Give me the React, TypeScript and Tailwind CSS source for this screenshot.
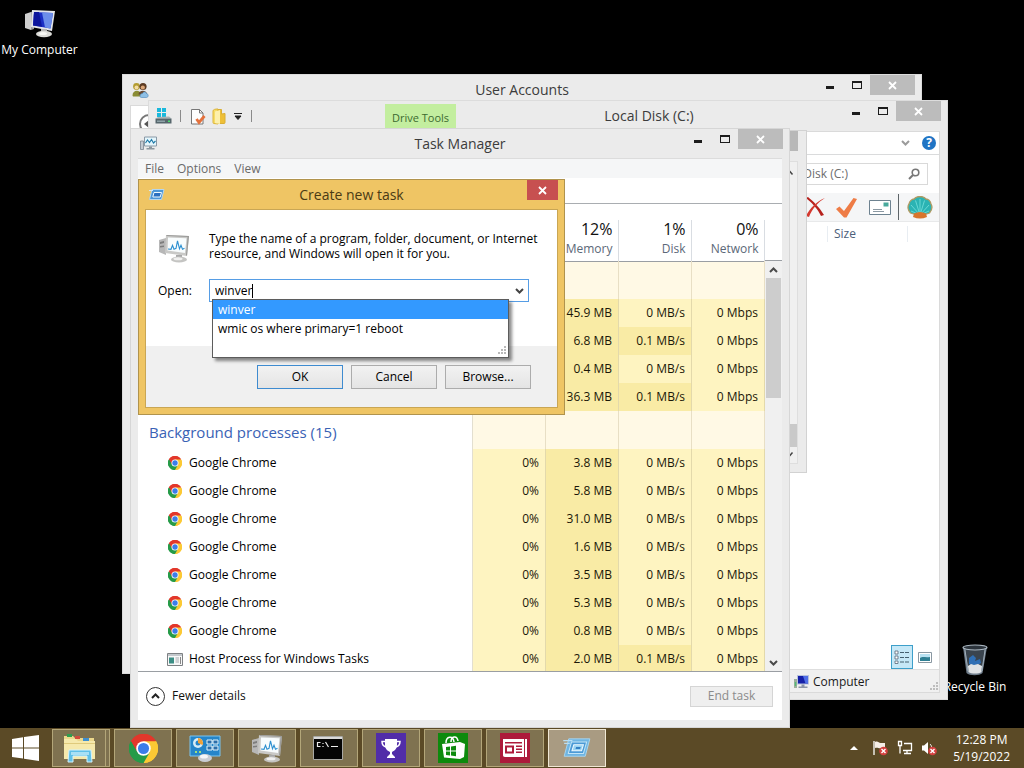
import React, { type ReactNode } from "react";

type SvgProps = { className?: string };

function ChromeIcon({ className }: SvgProps) {
  return (
    <svg viewBox="0 0 48 48" className={className} aria-hidden="true">
      <path d="M24 24 3.2 12A24 24 0 0 1 44.8 12Z" fill="#e2372b" />
      <path d="M24 24 44.8 12A24 24 0 0 1 24 48Z" fill="#fcc934" />
      <path d="M24 24 24 48A24 24 0 0 1 3.2 12Z" fill="#259b48" />
      <path d="M24 12H44.8A24 24 0 0 0 3.2 12L13.6 30Z" fill="#e2372b" />
      <path d="M34.4 30 24 48A24 24 0 0 0 44.8 12H24Z" fill="#fcc934" />
      <path d="M13.6 30 3.2 12A24 24 0 0 0 24 48L34.4 30Z" fill="#259b48" />
      <circle cx="24" cy="24" r="12" fill="#fff" />
      <circle cx="24" cy="24" r="9.2" fill="#3b7de9" />
    </svg>
  );
}

function ComputerIcon({ className }: SvgProps) {
  return (
    <svg viewBox="0 0 32 30" className={className} aria-hidden="true">
      <path d="M1 6 7 4v18l-6-2Z" fill="#cfcfcf" />
      <path d="m7 4 3-1v18l-3 1Z" fill="#9c9c9c" />
      <path d="M8 2 31 3 28 23 7 19Z" fill="#e4e6ea" />
      <path d="M10 4 29 5 26.500 20.500 9 17.500Z" fill="#1b2fc4" />
      <path d="M18 4.500 29 5 26.500 20.500 21 19.500Z" fill="#6c8eea" />
      <path d="M10 4h5l3 14.800L9 17.500Z" fill="#0c159c" />
      <path d="M17 21h6v4h-6Z" fill="#b5b5b5" />
      <ellipse cx="20" cy="26" rx="8" ry="3.200" fill="#dcdcd8" />
      <ellipse cx="19" cy="25.500" rx="4" ry="1.600" fill="#f7f7f4" />
    </svg>
  );
}

function SmallComputerIcon({ className }: SvgProps) {
  return (
    <svg viewBox="0 0 17 15" className={className} aria-hidden="true">
      <path d="M1 5h3v9H1Z" fill="#9db09d" />
      <path d="M1.800 8h1.400v4H1.800Z" fill="#5b7" />
      <path d="M4 1h12v9.500H4Z" fill="#b9c3dd" />
      <path d="M5 2h10v7.500H5Z" fill="#1520a8" />
      <path d="M10 2h5v7.500h-2.500Z" fill="#4f6ee6" />
      <path d="M8.500 10.500h3v2h3v1.500h-9v-1.500h3Z" fill="#8d96a8" />
    </svg>
  );
}

function MonitorIcon({ className }: SvgProps) {
  return (
    <svg viewBox="0 0 32 30" className={className} aria-hidden="true">
      <path d="M1 7 8 5v17l-7-3Z" fill="#b7b7b7" />
      <path d="M2 9l4-1v2L2 11Zm0 4 4-.5v1.500L2 14.500Z" fill="#7d7d7d" />
      <path d="m8 2 23 1-2 20L7 20Z" fill="#c9c9c7" />
      <path d="m8 2 23 1-2 20-1-1 1.500-18L9 3Z" fill="#9a9a98" />
      <path d="m10 4.500 18.500.700L27 20 9.500 17.500Z" fill="#f8fcfd" />
      <path
        d="m10 16 3 .3 1.500-4 1.500 4 2-1 1.500-7.500 2 8 1.500-3.500 1.500 4 2-1"
        fill="none"
        stroke="#2b8fd0"
        strokeWidth="1.100"
      />
      <path d="M18 22h6v3h-6Z" fill="#a8a8a8" />
      <ellipse cx="21" cy="26.500" rx="8" ry="3" fill="#c4c4c2" />
      <ellipse cx="20" cy="25.800" rx="4.500" ry="1.500" fill="#f0f0ef" />
    </svg>
  );
}

function TaskManagerSmallIcon({ className }: SvgProps) {
  return (
    <svg viewBox="0 0 17 15" className={className} aria-hidden="true">
      <path d="M.5 5h3v8.500h-3Z" fill="#c5cbd2" stroke="#7b8792" strokeWidth=".8" />
      <path d="M4.500 1h12v9h-12Z" fill="#e5f6fc" stroke="#8a99a6" />
      <path d="m5.500 7 2-3 2 2.500 2-3 2 3.500 2-2" fill="none" stroke="#1f7aa8" strokeWidth="1.100" />
      <path d="M9 10.500h3V12h2.500v1.500h-8V12H9Z" fill="#8b969e" />
    </svg>
  );
}

function RunIcon({ className }: SvgProps) {
  return (
    <svg viewBox="0 0 32 24" className={className} aria-hidden="true">
      <path d="M7 2h23l-5 19H2Z" fill="#6fb5e3" stroke="#a9d8f2" />
      <path d="M1 4h10M2 7h6" stroke="#b9def3" strokeWidth="1.300" />
      <path d="M10 5.500h16.500L23 18H6.500Z" fill="#4c9ad6" stroke="#c3e5f7" strokeWidth="1.100" />
      <path d="M12.500 8.500h10.500L21 15H10.500Z" fill="#9ad3f2" stroke="#eef9ff" strokeWidth="1.100" />
      <path d="M15 11h5l-.6 2h-5Z" fill="#3380c4" />
    </svg>
  );
}

function SmallRunIcon({ className }: SvgProps) {
  return (
    <svg viewBox="0 0 17 13" className={className} aria-hidden="true">
      <path d="M4 1.500h12l-2.500 10H1.500Z" fill="#4d97d8" stroke="#b5d6ee" />
      <path d="M1 2.500h4" stroke="#d5e8f4" />
      <path d="M6 4.500h7.500l-1.300 4.500H4.800Z" fill="#2a6fc0" stroke="#f0f9ff" />
    </svg>
  );
}

function UsersIcon({ className }: SvgProps) {
  return (
    <svg viewBox="0 0 17 16" className={className} aria-hidden="true">
      <circle cx="4.500" cy="4" r="3.400" fill="#b39c30" />
      <circle cx="4.500" cy="5" r="2" fill="#f3dca5" />
      <path d="M.5 13c0-6 8-6 8.500-1v2H1Z" fill="#8a8c34" />
      <circle cx="11" cy="4" r="3.600" fill="#5b3a22" />
      <circle cx="10.800" cy="5" r="2.100" fill="#dba678" />
      <path d="M6.500 12c0-5 8.500-5 8.500 0Z" fill="#6b4a33" />
      <path d="M8 13.500c0-2 2-2.500 2.500-2.500 1-2.500 4-1.500 4 0 2.500.500 2 4 0 4h-5C8.500 15 8 14.500 8 13.500Z" fill="#8fc0e6" stroke="#4c86b9" strokeWidth=".6" />
    </svg>
  );
}

function DriveIcon({ className }: SvgProps) {
  return (
    <svg viewBox="0 0 17 17" className={className} aria-hidden="true">
      <path d="M2 0h4v4H2Zm5 0h4v4H7ZM2 5h4v4H2Zm5 0h4v4H7Z" fill="#19b8dc" />
      <path d="m3 9 11-.5 2.500 2H1Z" fill="#a9b3b5" />
      <path d="M.5 10.500h16v5H.5Z" fill="#56666c" />
      <path d="M2 12.500h8v1.500H2Z" fill="#8ea2a7" />
      <path d="M13 12.500h2V14h-2Z" fill="#4be06d" />
    </svg>
  );
}

function DocumentCheckIcon({ className }: SvgProps) {
  return (
    <svg viewBox="0 0 16 17" className={className} aria-hidden="true">
      <path d="M1.500 1.500h8l3.500 3.500v11H1.500Z" fill="#fdfdfd" stroke="#777" />
      <path d="M9.500 1.500V5H13" fill="none" stroke="#777" />
      <path d="m6.500 11 2.500 3.500L14.500 8" fill="none" stroke="#e4713c" strokeWidth="2.800" />
    </svg>
  );
}

function FolderIcon({ className }: SvgProps) {
  return (
    <svg viewBox="0 0 14 17" className={className} aria-hidden="true">
      <path d="M1 3c0-1.500 2-2 5-2v15l-4-.5q-1 0-1-1Z" fill="#f7dc66" stroke="#dcb53c" />
      <path d="M6 1.500h3.500V6l3.500-.5v9q0 1-1 1H6Z" fill="#eebf37" stroke="#d9ae35" />
      <path d="M3 3.500 8 2v14l-5-1Z" fill="#fdf0ac" />
    </svg>
  );
}

function ShellIcon({ className }: SvgProps) {
  return (
    <svg viewBox="0 0 26 23" className={className} aria-hidden="true">
      <path d="M13 20 3.500 17C.5 14 .5 10 2 8c.5-3 3-5 5-5 1.500-2 4-2.500 6-2.500S17.500 1 19 3c2.500 0 4.500 2.500 5 5 1.500 2.500 1 6-1.500 9Z" fill="#2bb3b3" stroke="#b09a62" strokeWidth="1.300" />
      <path d="M13 19V3M13 19 8.500 4.500M13 19l4.500-14.500M13 19 4 9M13 19 22 9M13 19 4 15M13 19l9-4" stroke="#6fdcd8" strokeWidth=".9" />
      <path d="M7 17.500q6-3 12 0l1 3.500q-7 3-14 0Z" fill="#d9752c" />
    </svg>
  );
}

function ProcessWindowIcon({ className }: SvgProps) {
  return (
    <svg viewBox="0 0 16 13" className={className} aria-hidden="true">
      <path d="M.5.5h15v12H.5Z" fill="#f8f8f8" stroke="#7d8083" />
      <path d="M1 1h14v2H1Z" fill="#c3c8cc" />
      <path d="M2 4.500h5v6H2Z" fill="#3c8e85" />
      <path d="M8.500 5H12M8.500 7H12M8.500 9H12" stroke="#a5a9ad" />
      <path d="M13.500 4v7" stroke="#888" />
    </svg>
  );
}

function CloseGlyph() {
  return (
    <svg viewBox="0 0 9 9" className="size-[9px]" aria-hidden="true">
      <path d="m1 1 7 7M8 1 1 8" stroke="#fff" strokeWidth="1.800" />
    </svg>
  );
}

function CaptionButtons() {
  return (
    <div className="flex items-start">
      <button aria-label="Minimize" className="flex h-5 w-7 items-center justify-center">
        <span className="mt-1 h-[3px] w-2 bg-[#1c1c1c]" />
      </button>
      <button aria-label="Maximize" className="flex h-5 w-[26px] items-center justify-center">
        <span className="h-2 w-[10px] border border-t-2 border-[#1c1c1c]" />
      </button>
      <button aria-label="Close" className="flex h-5 w-[45px] items-center justify-center bg-[#bcbcbc]">
        <CloseGlyph />
      </button>
    </div>
  );
}

function TitleBar({ icon, title, height }: { icon: ReactNode; title: string; height: string }) {
  return (
    <header className={`flex shrink-0 items-start ${height}`}>
      <div className="flex h-full w-[116px] items-center pl-[9px]">{icon}</div>
      <h2 className="flex h-full flex-1 items-center justify-center text-sm text-[#3c3c3c]">{title}</h2>
      <div className="flex w-[116px] shrink-0 justify-end pr-[6px]">
        <CaptionButtons />
      </div>
    </header>
  );
}

function UserAccountsWindow() {
  return (
    <section className="absolute left-[122px] top-[74px] flex h-[600px] w-[800px] flex-col border border-[#dcdcdc] bg-[#ebebeb]">
      <TitleBar icon={<UsersIcon className="size-[17px]" />} title="User Accounts" height="h-[30px]" />
      <div className="mx-[7px] mb-[7px] flex-1 border border-[#dadada] bg-white pl-2 pt-2">
        <button aria-label="Back" className="flex size-5 items-center justify-center rounded-full border-2 border-[#777]">
          <svg viewBox="0 0 10 8" className="h-2 w-[10px]" aria-hidden="true">
            <path d="M5 0 0 4l5 4V5h5V3H5Z" fill="#555" />
          </svg>
        </button>
      </div>
    </section>
  );
}

function DiskWindow() {
  return (
    <section className="absolute left-[148px] top-[100px] flex h-[600px] w-[800px] flex-col border border-[#dcdcdc] bg-[#ebebeb]">
      <header className="flex h-[30px] shrink-0 items-start">
        <div className="flex h-full items-center pl-[6px]">
          <DriveIcon className="size-[17px]" />
          <span className="ml-[8px] h-3 w-px bg-[#8a8a8a]" />
          <DocumentCheckIcon className="ml-[9px] h-[17px] w-4" />
          <FolderIcon className="ml-[6px] h-[17px] w-[14px]" />
          <svg viewBox="0 0 8 7" className="ml-2 h-[7px] w-2" aria-hidden="true">
            <path d="M0 .5h8M1 3h6L4 6.500Z" stroke="#222" strokeWidth="1" fill="#222" />
          </svg>
          <span className="ml-[9px] h-3 w-px bg-[#8a8a8a]" />
        </div>
        <div className="ml-[133px] mt-[3px] flex h-[25px] w-[71px] items-end justify-center bg-[#c3ee9f] pb-[3px] text-[11px] text-[#3c6a30]">
          Drive Tools
        </div>
        <h2 className="flex h-full flex-1 items-center justify-center text-sm text-[#3c3c3c]">Local Disk (C:)</h2>
        <div className="mr-[6px]">
          <CaptionButtons />
        </div>
      </header>
      <div className="mx-[7px] mb-[6px] flex flex-1 flex-col border border-[#dadada] bg-white">
        <div className="flex h-[23px] items-center justify-end gap-3 border-b border-[#dadbdc] pr-[3px]">
          <svg viewBox="0 0 9 6" className="h-[6px] w-[9px]" aria-hidden="true">
            <path d="m1 1 3.500 3.500L8 1" fill="none" stroke="#9b9b9b" strokeWidth="2" />
          </svg>
          <button aria-label="Help" className="flex size-[14px] items-center justify-center rounded-full bg-[#1f74c4] text-[12px] font-bold leading-none text-white">
            ?
          </button>
        </div>
        <div className="flex h-[38px] items-center justify-end pr-[11px]">
          <div className="flex h-[22px] w-[280px] items-center border border-[#d9d9d9] pr-[7px]">
            <input
              aria-label="Search"
              readOnly
              value="Search Local Disk (C:)"
              className="mr-[60px] min-w-0 flex-1 bg-transparent text-right text-[12px] text-[#6d6d6d] outline-none"
            />
            <svg viewBox="0 0 12 12" className="size-3 shrink-0" aria-hidden="true">
              <circle cx="7.500" cy="4.500" r="3.300" fill="none" stroke="#777" strokeWidth="1.600" />
              <path d="M5 7 1 11" stroke="#777" strokeWidth="2" />
            </svg>
          </div>
        </div>
        <div className="flex h-[29px] items-center justify-end border-b border-[#e8e9ea] bg-[#f5f6f7] pr-[6px]">
          <svg viewBox="0 0 22 20" className="h-5 w-[22px]" aria-hidden="true">
            <path d="M2 1c5 4 12 11 15 18l3-1C16 11 9 4 4 0Z" fill="#b7221d" />
            <path d="M21 1C13 4 6 11 2 19l3 1C8 12 14 5 21 1Z" fill="#d4392f" />
          </svg>
          <svg viewBox="0 0 21 21" className="ml-[10px] size-[21px]" aria-hidden="true">
            <path d="m0 12 3.500-2.500L8 14 17.500 1l3.500 1L10.500 20.500H8Z" fill="#ee7c46" />
          </svg>
          <svg viewBox="0 0 22 15" className="ml-[12px] h-[15px] w-[22px]" aria-hidden="true">
            <path d="M.5.5h21v14H.5Z" fill="#fff" stroke="#6d8290" />
            <path d="M14.500 2.500h5v4h-5Z" fill="#48a99c" />
            <path d="M4 9.500h9M4 11.500h11" stroke="#8b99a3" />
          </svg>
          <span className="ml-[7px] h-[26px] w-px bg-[#5d6468]" />
          <ShellIcon className="ml-[8px] h-[23px] w-[26px]" />
        </div>
        <div className="flex h-6 items-center justify-end pr-[31px]">
          <span className="flex h-4 w-[81px] items-center border-x border-[#e8edf2] pl-[6px] text-[12px] text-[#4c607a]">Size</span>
        </div>
        <div className="flex flex-1 items-end justify-end gap-1 pr-[6px]">
          <button aria-label="Details view" className="flex h-6 w-[22px] items-center justify-center border border-[#3d9fca] bg-[#c6e8f7]">
            <svg viewBox="0 0 16 14" className="h-[14px] w-4" aria-hidden="true">
              <path d="M1 1h3v3H1Zm0 5h3v3H1Zm0 5h3v2.500H1Z" fill="#fff" stroke="#567" strokeWidth=".8" />
              <path d="M6 2.500h4m1 0h4M6 7.500h4m1 0h4M6 12h4m1 0h4" stroke="#45606f" />
            </svg>
          </button>
          <button aria-label="Large icons view" className="flex h-6 w-4 items-center justify-center">
            <svg viewBox="0 0 14 11" className="h-[11px] w-[14px]" aria-hidden="true">
              <path d="M.5.500h13v10H.5Z" fill="#fff" stroke="#8a98a2" />
              <path d="M2 2h10v7H2Z" fill="#b9e2f2" />
              <path d="M2 6c3-2 5 0 10-1v4H2Z" fill="#2f7f93" />
            </svg>
          </button>
        </div>
        <footer className="flex h-[23px] items-center border-t border-[#dedede] bg-[#f0f0f0] pl-[636px] pt-px text-[12px] text-[#1a1a1a]">
          <SmallComputerIcon className="h-[15px] w-[17px]" />
          <span className="ml-[3px] flex-1">Computer</span>
          <svg viewBox="0 0 10 10" className="mt-2 size-[10px]" aria-hidden="true">
            <path d="M7 1h2v2H7ZM4 4h2v2H4Zm3 0h2v2H7ZM1 7h2v2H1Zm3 0h2v2H4Zm3 0h2v2H7Z" fill="#bdbdbd" />
          </svg>
        </footer>
      </div>
    </section>
  );
}

function BackgroundWindow() {
  return (
    <section className="absolute left-[180px] top-[130px] flex h-[343px] w-[627px] flex-col border border-[#d2d2d2] bg-[#ebebeb]">
      <div className="mr-[8px] h-5 w-[45px] shrink-0 self-end bg-[#b8b8b8]" />
      <div className="mx-[8px] mb-[8px] mt-[10px] flex flex-1 justify-end border border-[#dedede] bg-white">
        <div className="flex w-4 flex-col items-center bg-[#f0f0f0]">
          <svg viewBox="0 0 7 5" className="mt-2 h-[5px] w-[9px]" aria-hidden="true">
            <path d="M.5 4.500 3.500 1l3 3.500" fill="none" stroke="#444" strokeWidth="1.500" />
          </svg>
          <span className="mb-[5px] mt-auto h-[23px] w-full bg-[#c9c9c9]" />
          <svg viewBox="0 0 7 5" className="mb-[6px] h-[5px] w-[9px]" aria-hidden="true">
            <path d="m.5.500 3 3.500 3-3.500" fill="none" stroke="#444" strokeWidth="1.500" />
          </svg>
        </div>
      </div>
    </section>
  );
}

const LIGHT = "bg-[#fef4c1]";
const DARK = "bg-[#f9eba5]";

type Row = { name?: string; cpu?: string; memory: string; disk: string; network: string };

const apps: Row[] = [
  { memory: "45.9 MB", disk: "0 MB/s", network: "0 Mbps" },
  { memory: "6.8 MB", disk: "0.1 MB/s", network: "0 Mbps" },
  { memory: "0.4 MB", disk: "0 MB/s", network: "0 Mbps" },
  { memory: "36.3 MB", disk: "0.1 MB/s", network: "0 Mbps" },
];

const chrome = (memory: string): Row => ({ name: "Google Chrome", cpu: "0%", memory, disk: "0 MB/s", network: "0 Mbps" });

const background: Row[] = [
  chrome("3.8 MB"),
  chrome("5.8 MB"),
  chrome("31.0 MB"),
  chrome("1.6 MB"),
  chrome("3.5 MB"),
  chrome("5.3 MB"),
  chrome("0.8 MB"),
  { name: "Host Process for Windows Tasks", cpu: "0%", memory: "2.0 MB", disk: "0.1 MB/s", network: "0 Mbps" },
];

function ProcessRow({ row }: { row: Row }) {
  return (
    <tr className="h-7 text-[#1b1708]">
      <td className="border-r border-[#e3dfd0] pl-[29px] text-black">
        {row.name && (
          <span className="flex items-center gap-[6px]">
            <span className="flex w-4 justify-center">
              {row.name === "Google Chrome" ? (
                <ChromeIcon className="size-[14px]" />
              ) : (
                <ProcessWindowIcon className="h-[13px] w-4" />
              )}
            </span>
            {row.name}
          </span>
        )}
      </td>
      <td className={`border-r border-[#e3d9ab] pr-[6px] text-right ${LIGHT}`}>{row.cpu}</td>
      <td className={`border-r border-[#e3d9ab] pr-[6px] text-right ${DARK}`}>{row.memory}</td>
      <td className={`border-r border-[#e3d9ab] pr-[6px] text-right ${row.disk === "0 MB/s" ? LIGHT : DARK}`}>{row.disk}</td>
      <td className={`border-r border-[#e3d9ab] pr-[6px] text-right ${LIGHT}`}>{row.network}</td>
    </tr>
  );
}

function GroupRow({ title }: { title?: string }) {
  const cell = "border-r border-[#e8dfc5] bg-[#fff9e5]";
  return (
    <tr className="h-[38px]">
      <td className="border-r border-[#e3dfd0] pl-[11px] pt-1 text-[15px] leading-5 text-[#3a62b5]">{title}</td>
      <td className={cell} />
      <td className={cell} />
      <td className={cell} />
      <td className={cell} />
    </tr>
  );
}

function HeaderCell({ value, label }: { value: string; label: string }) {
  return (
    <th className="p-0 align-bottom font-normal">
      <div className="h-[41px] border-r border-[#d9dde2] pr-[5px] text-right">
        <span className="block text-base leading-[19px] text-[#111]">{value}</span>
        <span className="block text-[12px] leading-5 text-[#5b6878]">{label}</span>
      </div>
    </th>
  );
}

function TaskManagerWindow() {
  return (
    <section className="absolute left-[130px] top-[128px] flex h-[600px] w-[660px] flex-col border border-[#d6d6d6] bg-[#ebebeb]">
      <TitleBar icon={<TaskManagerSmallIcon className="h-[15px] w-[17px]" />} title="Task Manager" height="h-[29px]" />
      <div className="mx-[7px] mb-[7px] flex min-h-0 flex-1 flex-col bg-white">
        <nav className="flex h-5 shrink-0 items-center gap-[13px] border-t border-[#dcdcdc] bg-[#f5f6f7] pl-[7px] text-[12px] text-[#6a6a6a]">
          <button>File</button>
          <button>Options</button>
          <button>View</button>
        </nav>
        <div className="h-[26px] shrink-0 border-b border-[#a9adb1]" />
        <div className="flex min-h-0 flex-1 overflow-hidden">
          <div className="min-w-0 flex-1 overflow-hidden">
            <table className="w-full table-fixed border-collapse text-[12px]">
              <colgroup>
                <col />
                <col className="w-[73px]" />
                <col className="w-[73px]" />
                <col className="w-[73px]" />
                <col className="w-[73px]" />
              </colgroup>
              <thead>
                <tr className="h-[57px] border-b border-[#9a9ea3]">
                  <th />
                  <th />
                  <HeaderCell value="12%" label="Memory" />
                  <HeaderCell value="1%" label="Disk" />
                  <HeaderCell value="0%" label="Network" />
                </tr>
              </thead>
              <tbody>
                <GroupRow />
                {apps.map((row, i) => (
                  <ProcessRow key={i} row={row} />
                ))}
                <GroupRow title="Background processes (15)" />
                {background.map((row, i) => (
                  <ProcessRow key={i} row={row} />
                ))}
              </tbody>
            </table>
          </div>
          <div className="flex w-[17px] shrink-0 flex-col">
            <div className="h-[57px] shrink-0 border-b border-[#9a9ea3]" />
            <div className="flex flex-1 flex-col items-center bg-[#f0f0f0] px-px">
              <button aria-label="Scroll up" className="flex h-[17px] w-full items-center justify-center">
                <svg viewBox="0 0 9 6" className="h-[6px] w-[9px]" aria-hidden="true">
                  <path d="M1 5 4.500 1.500 8 5" fill="none" stroke="#4a4a4a" strokeWidth="2" />
                </svg>
              </button>
              <div className="h-[120px] w-full bg-[#cdcdcd]" />
              <button aria-label="Scroll down" className="mt-auto flex h-[17px] w-full items-center justify-center">
                <svg viewBox="0 0 9 6" className="h-[6px] w-[9px]" aria-hidden="true">
                  <path d="m1 1 3.500 3.500L8 1" fill="none" stroke="#4a4a4a" strokeWidth="2" />
                </svg>
              </button>
            </div>
          </div>
        </div>
        <footer className="flex h-[49px] shrink-0 items-center justify-between border-t border-[#9a9ea3] pl-2 pr-[9px] text-[12px]">
          <button className="flex items-center gap-[7px] text-[#111]">
            <span className="flex size-[19px] items-center justify-center rounded-full border border-[#333]">
              <svg viewBox="0 0 9 6" className="h-[6px] w-[9px]" aria-hidden="true">
                <path d="M1 5 4.500 1.500 8 5" fill="none" stroke="#222" strokeWidth="2" />
              </svg>
            </span>
            Fewer details
          </button>
          <button disabled className="h-[21px] w-[83px] border border-[#d5d5d5] bg-[#efefef] leading-none text-[#8b8b8b]">
            End task
          </button>
        </footer>
      </div>
    </section>
  );
}

function DialogButton({ children, primary }: { children: ReactNode; primary?: boolean }) {
  return (
    <button
      className={`h-6 w-[86px] border bg-linear-to-b from-[#f2f2f2] to-[#e4e4e4] text-[12px] leading-none text-black ${
        primary ? "border-[#3e8bd0]" : "border-[#acacac]"
      }`}
    >
      {children}
    </button>
  );
}

function CreateTaskDialog() {
  return (
    <section
      role="dialog"
      aria-label="Create new task"
      className="absolute left-[138px] top-[179px] flex h-[236px] w-[427px] flex-col border border-[#b0934d] bg-[#efc564]"
    >
      <header className="flex h-[29px] shrink-0 items-start">
        <div className="flex h-full w-[37px] items-center pl-[9px]">
          <SmallRunIcon className="h-[13px] w-[17px]" />
        </div>
        <h2 className="flex h-full flex-1 items-center justify-center text-sm text-[#4a3a14]">Create new task</h2>
        <button aria-label="Close" className="mr-[6px] flex h-5 w-[31px] items-center justify-center bg-[#c75050]">
          <CloseGlyph />
        </button>
      </header>
      <div className="mx-[6px] mb-[6px] flex flex-1 flex-col border border-[#c9a654] bg-white">
        <div className="flex-1 px-3 pt-[21px]">
          <div className="flex gap-[19px]">
            <MonitorIcon className="mt-[2px] h-[30px] w-8" />
            <p className="text-[12px] leading-[15px] text-black">
              Type the name of a program, folder, document, or Internet
              <br />
              resource, and Windows will open it for you.
            </p>
          </div>
          <div className="mt-4 flex items-center">
            <label htmlFor="task-name" className="w-[51px] text-[12px]">
              Open:
            </label>
            <div className="relative flex h-[23px] w-[320px] items-center border border-[#569de5] bg-white pr-1">
              <input
                id="task-name"
                defaultValue="winver"
                className="h-full min-w-0 flex-1 bg-transparent pl-[5px] text-[12px] outline-none"
              />
              <span className="absolute left-[42px] top-1 h-[14px] w-px bg-black" />
              <svg viewBox="0 0 9 6" className="h-[6px] w-[9px]" aria-hidden="true">
                <path d="m1 1 3.500 3.500L8 1" fill="none" stroke="#444" strokeWidth="2" />
              </svg>
              <ul className="absolute left-[2px] top-[19px] h-[59px] w-[297px] border border-[#5c5c5c] bg-white text-[12px] shadow-[3px_3px_3px_rgba(0,0,0,0.45)]">
                <li className="flex h-[19px] items-center bg-[#3399ff] pl-[5px] text-white">winver</li>
                <li className="flex h-5 items-center pl-[5px]">wmic os where primary=1 reboot</li>
                <li className="flex h-[18px] items-end justify-end" aria-hidden="true">
                  <svg viewBox="0 0 12 12" className="size-3">
                    <path d="M8 1h2v2H8ZM5 4h2v2H5Zm3 0h2v2H8ZM2 7h2v2H2Zm3 0h2v2H5Zm3 0h2v2H8Z" fill="#b9b9b9" />
                  </svg>
                </li>
              </ul>
            </div>
          </div>
        </div>
        <div className="flex h-[61px] shrink-0 items-center justify-end gap-2 bg-[#f0f0f0] pr-[26px]">
          <DialogButton primary>OK</DialogButton>
          <DialogButton>Cancel</DialogButton>
          <DialogButton>Browse...</DialogButton>
        </div>
      </div>
    </section>
  );
}

function TaskButton({ label, active, children }: { label: string; active?: boolean; children: ReactNode }) {
  return (
    <button
      aria-label={label}
      className={`flex h-[38px] w-[58px] items-center justify-center border ${
        active ? "border-[#f0e8d4] bg-[#a99b82]" : "border-[#b3a679] bg-[#7f7250]"
      }`}
    >
      {children}
    </button>
  );
}

function Badge() {
  return (
    <>
      <circle cx="11.500" cy="11" r="4.300" fill="#d4403f" />
      <path d="m9.500 9 4 4m0-4-4 4" stroke="#fff" strokeWidth="1.400" />
    </>
  );
}

function Taskbar() {
  return (
    <footer className="flex h-10 shrink-0 items-center bg-[#5b4a26]">
      <button aria-label="Start" className="flex h-full w-[50px] items-center justify-center">
        <svg viewBox="0 0 27 26" className="h-[26px] w-[27px]" aria-hidden="true">
          <path d="M0 4 11 2.300V12.400H0ZM12 2.100 27 0v12.400H12ZM0 13.600h11v10L0 22Zm12 0h15V26l-15-2.300Z" fill="#fff" />
        </svg>
      </button>
      <div className="ml-[2px] flex items-center gap-1">
        <div className="flex w-[58px]">
          <button aria-label="File Explorer" className="flex h-[38px] w-[54px] items-center justify-center border border-[#b3a679] bg-[#7f7250]">
            <svg viewBox="0 0 32 30" className="h-[30px] w-8" aria-hidden="true">
              <path d="M1 3h9l2 2h19v20H1Z" fill="#ecd88c" />
              <path d="M4 1h5v3H4Z" fill="#2f9e50" />
              <path d="M12 3h5v3h-5Z" fill="#d24b3d" />
              <path d="M20 5h6v3h-6Z" fill="#3e8fd0" />
              <path d="M1 6h12l2 2h17v18H1Z" fill="#f6e9ac" />
              <path d="M1 10h31v1H1Z" fill="#dfca7c" />
              <path d="M6 17h22l1 12h-5v-6H10v6H5Z" fill="#5fc0e8" stroke="#d5f2fb" />
              <path d="M8 19h18v3H8Z" fill="#a9e0f5" />
            </svg>
          </button>
          <span className="h-[38px] w-1 border-y border-r border-[#b3a679] bg-[#7f7250]" />
        </div>
        <TaskButton label="Google Chrome">
          <ChromeIcon className="size-[29px]" />
        </TaskButton>
        <TaskButton label="Control Panel">
          <svg viewBox="0 0 32 28" className="h-7 w-8" aria-hidden="true">
            <path d="M1 2h30v20H1Z" fill="#2585c9" stroke="#7cc4ee" />
            <circle cx="9" cy="9" r="5" fill="#d7ecf6" />
            <circle cx="9" cy="9" r="2.500" fill="#2585c9" />
            <path d="M9 9V4a5 5 0 0 1 4.500 7Z" fill="#f0a138" />
            <path d="M18 6h5v4h-5Zm6 0h5v4h-5Zm-6 6h5v4h-5Zm6 0h5v4h-5Z" fill="#2b6eab" stroke="#e3f4fc" />
            <path d="M6 17h2v2H6Zm4 0h2v2h-2Z" fill="#9fe07c" />
            <ellipse cx="16" cy="24" rx="7" ry="4" fill="#c9cdd3" />
            <ellipse cx="15" cy="22.500" rx="4" ry="2" fill="#f5f6f8" />
          </svg>
        </TaskButton>
        <TaskButton label="Task Manager">
          <MonitorIcon className="h-[30px] w-8" />
        </TaskButton>
        <TaskButton label="Command Prompt">
          <svg viewBox="0 0 30 24" className="mr-[2px] h-6 w-[30px]" aria-hidden="true">
            <path d="M.5.5h29v23H.5Z" fill="#050505" stroke="#a8a8a4" />
            <path d="M1 1h28v2H1Z" fill="#dadada" />
            <path d="M7.500 6.500H4.500v4h3M10 7v1m0 2v1M12.500 6l3 5M18 10.500h7" fill="none" stroke="#eee" strokeWidth="1.200" />
          </svg>
        </TaskButton>
        <TaskButton label="Games">
          <svg viewBox="0 0 30 30" className="size-[30px]" aria-hidden="true">
            <path d="M0 0h30v30H0Z" fill="#512da8" />
            <path d="M9 6h12v6c0 4-3 6-5 7v2l3 3v1h-8v-1l3-3v-2c-2-1-5-3-5-7Z" fill="#fff" />
            <path d="M9 8.500H6c0 3.500 2 5 4.500 5.500M21 8.500h3c0 3.500-2 5-4.500 5.500" fill="none" stroke="#fff" strokeWidth="1.500" />
          </svg>
        </TaskButton>
        <TaskButton label="Store">
          <svg viewBox="0 0 30 30" className="size-[30px]" aria-hidden="true">
            <path d="M0 0h30v30H0Z" fill="#0d8a0d" />
            <path d="m4 11 18-2v17L6 24.500ZM22 9l5 2-1 13-4 2Z" fill="#fff" />
            <path d="M8 10c0-7 7-8 8-1m-3 0c0-6 6-7 7-1" fill="none" stroke="#fff" strokeWidth="1.500" />
            <path d="m8 14 4-.5v4H8Zm5-.6 5-.600v4.700h-5ZM8 18.500h4v4l-4-.500Zm5 0h5v4.700l-5-.600Z" fill="#0d8a0d" />
          </svg>
        </TaskButton>
        <TaskButton label="News">
          <svg viewBox="0 0 30 30" className="size-[30px]" aria-hidden="true">
            <path d="M0 0h30v30H0Z" fill="#ad1a3b" />
            <path d="M3 6h21v18H5c-1.500 0-2-1-2-2Zm22 0h2v18h-2Z" fill="#fff" />
            <path d="M5 9h17v1.500H5Zm0 3.500h9v8H5Zm11 0h6V14h-6Zm0 3h6V17h-6Zm0 3h6V20h-6Z" fill="#ad1a3b" />
            <path d="M7 14.500h5v4H7Z" fill="#fff" />
          </svg>
        </TaskButton>
        <TaskButton label="Create new task" active>
          <RunIcon className="h-[22px] w-[30px]" />
        </TaskButton>
      </div>
      <div className="ml-auto flex items-center pr-[14px] text-white">
        <button aria-label="Show hidden icons" className="mr-[14px]">
          <svg viewBox="0 0 8 4" className="h-1 w-2" aria-hidden="true">
            <path d="M0 4 4 0l4 4Z" fill="#fff" />
          </svg>
        </button>
        <svg viewBox="0 0 16 16" className="size-4" aria-hidden="true">
          <path d="M2 1v14" stroke="#fff" strokeWidth="1.300" />
          <path d="M3 2c3-1.500 4 1.500 6 1h4v5H9C7 9 6 7 3 8Z" fill="#f6efe8" />
          <Badge />
        </svg>
        <svg viewBox="0 0 16 16" className="ml-[9px] size-4" fill="none" stroke="#fff" aria-hidden="true">
          <path d="M7 3.500h7.500v7H6M10 10.500V13M7 13.500h7M1.500 1.500h3v4h-3ZM3 5.500v8" strokeWidth="1.300" />
        </svg>
        <svg viewBox="0 0 16 16" className="ml-[8px] size-4" aria-hidden="true">
          <path d="M1 5.500h2L7 2v12l-4-3.500H1Z" fill="#fff" />
          <path d="M9 4c1 1 1.500 2 1.500 3" fill="none" stroke="#fff" />
          <Badge />
        </svg>
        <time className="ml-4 block text-center text-[12px] leading-[17px]">
          12:28 PM
          <br />
          5/19/2022
        </time>
      </div>
    </footer>
  );
}

export default function App() {
  return (
    <div className='flex min-h-screen flex-col overflow-hidden bg-black font-["Open_Sans","Noto_Sans",sans-serif]'>
      <main className="relative flex-1">
        <a href="#computer" className="absolute left-0 top-[8px] flex w-[79px] flex-col items-center text-[12px] leading-4 text-white">
          <ComputerIcon className="h-[30px] w-8" />
          <span className="mt-1 whitespace-nowrap">My Computer</span>
        </a>
        <a href="#recycle" className="absolute left-[935px] top-[644px] flex w-20 flex-col items-center text-[12px] leading-4 text-white">
          <svg viewBox="0 0 26 32" className="h-8 w-[26px]" aria-hidden="true">
            <path d="m1 3 3.500 26c3 3 13 3 16 0L25 3Z" fill="#6f7d8b" />
            <path d="m3 5 3.500 22c3 2 10 2 13 0L23 5Z" fill="#3a444e" />
            <ellipse cx="13" cy="3.500" rx="12" ry="2.500" fill="#2c343c" stroke="#aab6c0" strokeWidth="1.200" />
            <path d="m7 14 4-3 3 3-1 3 5-2 1 4-5 3-4-1-3-1Z" fill="#2f6fb5" />
            <path d="m6 22 3-2 3 1 4-1 4 2-.5 6c-3 2-10 2-13 0Z" fill="#dfe3e6" />
            <path d="m3 6 3 21M23 6l-3 21" stroke="#9fadb8" />
          </svg>
          <span className="mt-[3px] whitespace-nowrap">Recycle Bin</span>
        </a>
        <UserAccountsWindow />
        <DiskWindow />
        <BackgroundWindow />
        <TaskManagerWindow />
        <CreateTaskDialog />
      </main>
      <Taskbar />
    </div>
  );
}
